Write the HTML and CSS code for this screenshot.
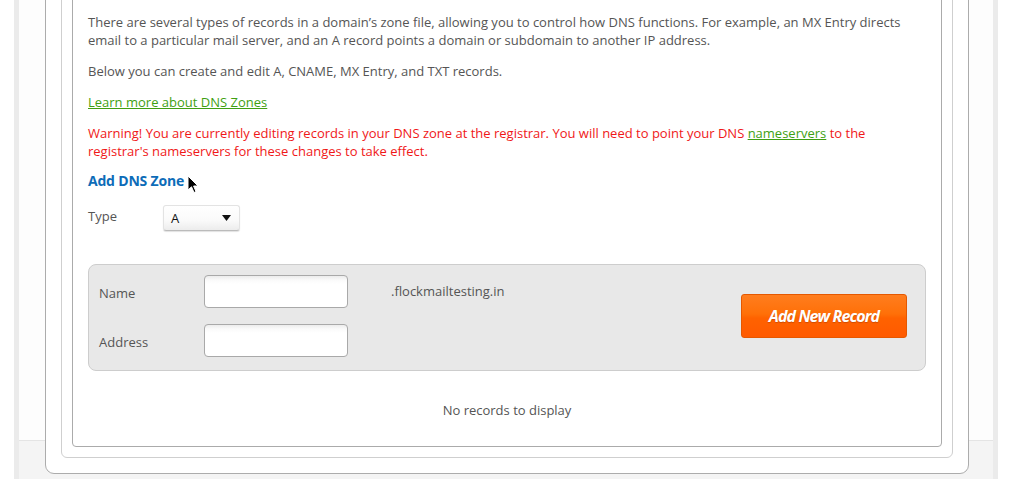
FILE: index.html
```html
<!DOCTYPE html>
<html>
<head>
<meta charset="utf-8">
<link rel="stylesheet" href="styles.css">
</head>
<body>
<div class="page">
  <div class="outer">
    <div class="middle">
      <div class="inner">
        <p class="txt">There are several types of records in a domain’s zone file, allowing you to control how DNS functions. For example, an MX Entry directs email to a particular mail server, and an A record points a domain or subdomain to another IP address.</p>
        <p class="txt">Below you can create and edit A, CNAME, MX Entry, and TXT records.</p>
        <p class="txt"><a class="link" href="#">Learn more about DNS Zones</a></p>
        <p class="txt warn">Warning! You are currently editing records in your DNS zone at the registrar. You will need to point your DNS <a class="link" href="#">nameservers</a> to the registrar's nameservers for these changes to take effect.</p>
        <h3 class="heading">Add DNS Zone<svg class="cursor" width="12" height="19" viewBox="0 0 12 19"><path d="M1 1 L1 15 L4.5 11.8 L7 17.5 L9 16.6 L6.6 11 L11 11 Z" fill="#000" stroke="#fff" stroke-width="1"/></svg></h3>
        <div class="typerow">
          <span class="typelabel">Type</span>
          <div class="selectwrap">
            <span class="selval">A</span>
            <svg class="selarrow" width="9" height="6" viewBox="0 0 9 6"><path d="M0 0 H9 L4.5 6 Z" fill="#111"/></svg>
          </div>
        </div>
        <div class="panel">
          <div class="fields">
            <label class="flabel">Name</label>
            <input class="finput" type="text">
            <span class="domain">.flockmailtesting.in</span>
            <label class="flabel">Address</label>
            <input class="finput" type="text">
          </div>
          <button class="addbtn">Add New Record</button>
        </div>
        <p class="empty">No records to display</p>
      </div>
    </div>
  </div>
</div>
</body>
</html>
```
FILE: styles.css
```css
html, body {
  margin: 0;
  padding: 0;
  background: #fff;
  font-family: "Open Sans", "Liberation Sans", sans-serif;
  overflow: hidden;
}
.page {
  margin-top: -40px;
  margin-left: 14px;
  width: 984px;
  box-sizing: border-box;
  border-left: 5px solid #ebebeb;
  border-right: 5px solid #ebebeb;
  background: linear-gradient(to bottom, #fdfdfd 0, #fdfdfd 480px, #e4e4e4 480px, #e4e4e4 481px, #f4f4f4 481px);
  padding: 0 24px 0 26px;
  height: 560px;
}
.outer {
  background: #fff;
  border: 1px solid #acacac;
  border-radius: 0 0 9px 9px;
  padding: 15px 15px 15px 15px;
}
.middle {
  border: 1px solid #cfcfcf;
  border-radius: 0 0 6px 6px;
  padding: 10px 10px 10px 10px;
}
.inner {
  border: 1px solid #ababab;
  border-radius: 0 0 4px 4px;
  padding: 25px 15px 27px 15px;
  color: #555;
  font-size: 13px;
  line-height: 18px;
}
.txt {
  margin: 0 0 13px 0;
}
.warn {
  color: #f01818;
  margin-bottom: 12px;
}
.link {
  color: #3f9f12;
  text-decoration: underline;
}
.heading {
  position: relative;
  margin: 0;
  font-size: 14px;
  line-height: 18px;
  font-weight: 700;
  color: #0d6cb8;
  letter-spacing: -0.2px;
}
.cursor {
  position: absolute;
  left: 99px;
  top: 3px;
}
.typerow {
  display: flex;
  align-items: center;
  margin-top: 15px;
  height: 26px;
}
.typelabel {
  width: 75px;
  margin-bottom: 4px;
}
.selectwrap {
  position: relative;
  width: 77px;
  height: 26px;
  box-sizing: border-box;
  border: 1px solid #e3e3e3;
  border-bottom-color: #bbb;
  border-radius: 3px;
  background: linear-gradient(to bottom, #ffffff 0%, #fafafa 60%, #ececec 100%);
  box-shadow: 0 1px 1px rgba(0,0,0,0.12);
  display: flex;
  align-items: center;
  padding-left: 7px;
  color: #111;
}
.selval {
  font-size: 13px;
}
.selarrow {
  position: absolute;
  right: 8px;
  top: 9px;
}
.panel {
  margin-top: 33px;
  background: #e8e8e8;
  border: 1px solid #cdcdcd;
  border-radius: 8px;
  padding: 10px 18px 13px 10px;
  display: flex;
  align-items: center;
}
.fields {
  display: grid;
  grid-template-columns: 105px 144px auto;
  grid-auto-rows: 33px;
  row-gap: 16px;
  align-items: center;
}
.flabel {
  color: #555;
  font-size: 13px;
  padding-top: 2px;
}
.finput {
  width: 144px;
  height: 33px;
  box-sizing: border-box;
  margin: 0;
  border: 1px solid #a9a9a9;
  border-radius: 4px;
  background: linear-gradient(to bottom, #ececec 0, #fafafa 4px, #fff 8px);
  outline: none;
}
.domain {
  margin-left: 43px;
  align-self: start;
  margin-top: 7px;
  color: #555;
}
.addbtn {
  margin-left: auto;
  width: 166px;
  height: 44px;
  border: 1px solid #e55800;
  border-radius: 3px;
  background: linear-gradient(to bottom, #ff7d1e 0%, #ff7008 45%, #ff6200 55%, #ff5a00 100%);
  color: #fff;
  font-family: "Open Sans", "Liberation Sans", sans-serif;
  font-style: italic;
  font-weight: 700;
  font-size: 16px;
  letter-spacing: -0.9px;
  text-shadow: 0 1px 1px rgba(150,50,0,0.45);
  padding: 0 0 1px 0;
  cursor: pointer;
}
.empty {
  margin: 30px 0 0 0;
  text-align: center;
}
```
